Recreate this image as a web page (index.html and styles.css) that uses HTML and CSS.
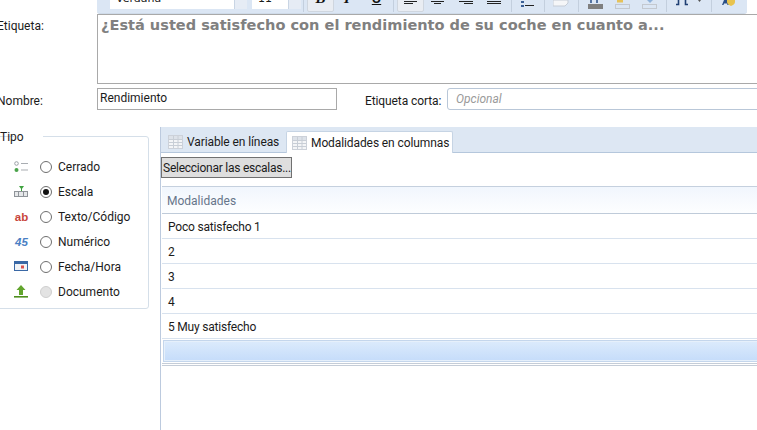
FILE: index.html
```html
<!DOCTYPE html>
<html lang="es">
<head>
<meta charset="utf-8">
<title>Pregunta</title>
<link rel="stylesheet" href="styles.css">
</head>
<body>
<svg class="defs" width="0" height="0">
  <symbol id="grid" viewBox="0 0 15 14">
    <rect x="0.5" y="0.5" width="14" height="13" fill="#f4f5f7" stroke="#ccd1d9"/>
    <rect x="1" y="1" width="13" height="3" fill="#dde2e9"/>
    <path d="M5.5 1v12M10 1v12M1 4.5h13M1 7.5h13M1 10.5h13" stroke="#c8ced6" fill="none"/>
  </symbol>
</svg>
<main class="page">
  <div class="toolbar">
    <div class="toolbar-row">
      <span class="grip"></span>
      <span class="combo font-combo"><span class="combo-text">Verdana</span><span class="combo-drop"></span></span>
      <span class="combo size-combo"><span class="combo-text">11</span><span class="combo-drop"></span></span>
      <span class="sep s1"></span>
      <span class="tool active bold">B</span>
      <span class="tool italic">I</span>
      <span class="tool underline">U</span>
      <span class="sep"></span>
      <span class="tool icon active align"><svg width="14" height="6"><path d="M0 1.5h13M0 3.5h9" stroke="#222"/></svg></span>
      <span class="tool icon align"><svg width="14" height="6"><path d="M0 1.5h13M3 3.5h7" stroke="#222"/></svg></span>
      <span class="tool icon align"><svg width="14" height="6"><path d="M0 1.5h14M5 3.5h9" stroke="#222"/></svg></span>
      <span class="tool icon align"><svg width="14" height="6"><path d="M0 1.5h14M0 3.5h14" stroke="#222"/></svg></span>
      <span class="sep s3"></span>
      <span class="tool icon bullets"><svg width="14" height="8"><rect x="0" y="1" width="3" height="2" fill="#3a5f95"/><rect x="0" y="5" width="3" height="2" fill="#3a5f95"/><path d="M4 5.5h9" stroke="#222"/></svg></span>
      <span class="sep"></span>
      <span class="tool icon paste"><svg width="18" height="8"><path d="M0 0h15v3l-3 3H0z" fill="#f5f6f8" stroke="#c5ccd6"/></svg></span>
      <span class="sep"></span>
      <span class="tool icon color first-color"><svg width="16" height="10"><path d="M3 0v3M9 0v3" stroke="#2a4f86" stroke-width="1.5"/><rect x="0" y="4" width="15" height="5" fill="#7f7f7f"/></svg></span>
      <span class="tool icon color"><svg width="16" height="10"><rect x="2" y="0" width="6" height="2.5" fill="#e6c25a"/><rect x="0.5" y="4.5" width="14" height="4" fill="none" stroke="#c3c8cf"/></svg></span>
      <span class="tool icon color"><svg width="16" height="10"><path d="M5 0h6l-3 3z" fill="#8fb2da"/><rect x="0.5" y="4.5" width="14" height="4" fill="none" stroke="#c3c8cf"/></svg></span>
      <span class="sep s3"></span>
      <span class="tool icon braces"><svg width="28" height="8"><path d="M3.5 0v4.5H1M10.5 0v4.5H13" fill="none" stroke="#1f3f73" stroke-width="1.6"/><path d="M23 0l1.5 2L26 0z" fill="#555"/></svg></span>
      <span class="sep"></span>
      <span class="tool icon spell"><svg width="15" height="8"><path d="M0 5l2-5h3l2 5H5.5L5 3.5H2L1.5 5z" fill="#2a4f86"/><path d="M5 0h8v2c0 2-2 3-4 4-2-1-4-2-4-4z" fill="#e8c34e"/></svg></span>
    </div>
  </div>

  <section class="form">
    <div class="form-row editor-row">
      <span class="field-label label-top">Etiqueta:</span>
      <div class="editor">¿Está usted satisfecho con el rendimiento de su coche en cuanto a...</div>
    </div>
    <div class="form-row name-row">
      <span class="field-label name-label">Nombre:</span>
      <div class="input name-input">Rendimiento</div>
      <span class="short-label">Etiqueta corta:</span>
      <div class="input short-input">Opcional</div>
    </div>
  </section>

  <section class="lower">
    <fieldset class="type-group">
      <legend>Tipo</legend>
      <div class="type-row">
        <svg class="type-icon" width="15" height="12" viewBox="0 0 15 12"><circle cx="2.5" cy="2.5" r="1.8" fill="#fff" stroke="#9aa0a6"/><circle cx="2.5" cy="9" r="2" fill="#4aa34a"/><path d="M7 2.5h7M7 9h7" stroke="#a9adb2" stroke-width="1.2"/></svg>
        <span class="radio"></span><span>Cerrado</span>
      </div>
      <div class="type-row">
        <svg class="type-icon" width="15" height="12" viewBox="0 0 15 12"><path d="M5 0h5L7.5 3.5z" fill="#3fa33f"/><rect x="7" y="2" width="1" height="3" fill="#3fa33f"/><rect x="0.5" y="5.5" width="13" height="5" fill="#e6e8ea" stroke="#8f9499"/><path d="M4.5 5.5v5M9.5 5.5v5" stroke="#8f9499"/></svg>
        <span class="radio checked"></span><span>Escala</span>
      </div>
      <div class="type-row">
        <span class="type-icon glyph ab">ab</span>
        <span class="radio"></span><span>Texto/Código</span>
      </div>
      <div class="type-row">
        <span class="type-icon glyph num">45</span>
        <span class="radio"></span><span>Numérico</span>
      </div>
      <div class="type-row">
        <svg class="type-icon" width="15" height="11" viewBox="0 0 15 11"><rect x="0" y="0" width="14" height="10" fill="#3a68a5"/><rect x="1" y="3" width="12" height="6" fill="#f1f3f6"/><rect x="7" y="4.5" width="3" height="3" fill="#d9534f"/></svg>
        <span class="radio"></span><span>Fecha/Hora</span>
      </div>
      <div class="type-row">
        <svg class="type-icon" width="15" height="13" viewBox="0 0 15 13"><path d="M7 0l4.5 5H9v5H5V5H2.5z" fill="#62a52d"/><rect x="0" y="11" width="14" height="1.6" fill="#4f8f1f"/></svg>
        <span class="radio disabled"></span><span>Documento</span>
      </div>
    </fieldset>

    <div class="panel">
      <div class="tabs">
        <div class="tab"><svg class="tab-icon" width="15" height="14"><use href="#grid"/></svg>Variable en líneas</div>
        <div class="tab current"><svg class="tab-icon" width="15" height="14"><use href="#grid"/></svg>Modalidades en columnas</div>
      </div>
      <div class="tab-body">
        <button class="scale-button" type="button">Seleccionar las escalas...</button>
        <div class="table">
          <div class="table-head">Modalidades</div>
          <div class="table-row">Poco satisfecho 1</div>
          <div class="table-row">2</div>
          <div class="table-row">3</div>
          <div class="table-row">4</div>
          <div class="table-row">5 Muy satisfecho</div>
          <div class="table-new"></div>
        </div>
      </div>
    </div>
  </section>
</main>
</body>
</html>
```

FILE: styles.css
```css
* { box-sizing: border-box; }
html, body { margin: 0; padding: 0; background: #fff; }
.defs { position: absolute; }
.page {
  width: 757px;
  height: 430px;
  overflow: hidden;
  font-family: Roboto, "Noto Sans", sans-serif;
  font-size: 12px;
  color: #1b1b1b;
  white-space: nowrap;
}

/* toolbar, scrolled partly out of view */
.toolbar {
  width: 650px;
  height: 14px;
  margin-left: 97px;
  overflow: hidden;
  background: #dbe6f4;
  border-bottom: 1px solid #cfdbe9;
  border-radius: 0 0 3px 3px;
}
.toolbar-row {
  display: flex;
  align-items: flex-start;
  height: 27px;
  margin-top: -15px;
}
.grip { width: 13px; }
.combo { display: flex; height: 24px; background: #fff; }
.font-combo { width: 137px; }
.size-combo { width: 49px; margin-left: 5px; }
.combo-text {
  flex: 1;
  padding: 7px 0 0 6px;
  font-family: "DejaVu Sans", sans-serif;
  font-size: 11px;
  line-height: 14px;
}
.combo-drop { width: 13px; background: #e6ecf5; border-left: 1px solid #c9d5e4; }
.sep { flex: none; width: 1px; height: 27px; background: #c3cfde; }
.s1 { margin-left: 2px; }
.s3 { margin-left: 3px; }
.tool { display: flex; justify-content: center; height: 27px; flex: none; }
.tool.icon { padding-top: 15px; }
.tool svg { flex: none; }
.active { background: #e9edf3; border: 1px solid #cfd6df; border-radius: 2px; }
.bold, .italic, .underline {
  align-items: center;
  font-family: "Liberation Serif", serif;
  font-size: 15px;
  font-weight: 700;
  color: #111;
}
.bold { width: 27px; margin-left: 3px; font-style: italic; }
.italic { width: 26px; font-style: italic; }
.underline { width: 33px; text-decoration: underline; font-family: "Liberation Sans", sans-serif; font-size: 13px; }
.align { width: 28px; }
.align.active { width: 27px; margin-left: 3px; padding-top: 14px; }
.bullets { width: 32px; }
.paste { width: 33px; }
.color { width: 27px; }
.first-color { margin-left: 3px; }
.braces { width: 44px; }
.spell { width: 34px; }

/* form */
.form { margin-left: -3px; margin-right: -20px; }
.form-row { display: flex; }
.field-label { width: 100px; flex: none; }
.label-top { padding-top: 5px; }
.editor {
  flex: 1;
  height: 70px;
  padding: 0 3px;
  border: 1px solid #a9a9a9;
  font-family: "DejaVu Sans", sans-serif;
  font-size: 14.55px;
  font-weight: 700;
  line-height: 20px;
  color: #808080;
}
.name-row { margin-top: 4px; align-items: center; height: 22px; }
.name-label { padding-top: 3px; }
.input { height: 22px; border: 1px solid #a9a9a9; }
.name-input { width: 240px; padding: 0 2px; line-height: 18px; }
.short-label { margin-left: 28px; width: 82px; padding-top: 3px; letter-spacing: -0.1px; }
.short-input {
  flex: 1;
  padding-left: 8px;
  border-color: #b9c7d8;
  border-radius: 3px;
  line-height: 21px;
  font-style: italic;
  color: #9a9a9a;
}

/* lower part */
.lower { display: flex; margin-top: 17px; height: 303px; }
.type-group {
  flex: none;
  width: 159px;
  height: 181px;
  margin: 1px 0 0 -10px;
  padding: 10px 0 0 23px;
  border: 1px solid #d5dfe9;
  border-radius: 3px;
}
.type-group legend { padding: 0 5px 0 0; line-height: 16px; position: relative; left: -14px; top: 1px; }
.type-row { display: flex; align-items: center; height: 25px; }
.type-icon { width: 15px; flex: none; margin-right: 11px; }
.glyph { font-family: "Liberation Sans", sans-serif; font-weight: 700; font-size: 11.5px; line-height: 12px; text-align: center; }
.ab { color: #c8453c; }
.num { color: #4a7fc4; font-style: italic; }
.radio {
  flex: none;
  position: relative;
  width: 12px;
  height: 12px;
  margin-right: 6px;
  border: 1px solid #6e6e6e;
  border-radius: 50%;
  background: #fff;
}
.radio.checked::after {
  content: "";
  position: absolute;
  left: 2px;
  top: 2px;
  width: 6px;
  height: 6px;
  border-radius: 50%;
  background: #111;
}
.radio.disabled { background: #e3e3e3; border-color: #cfcfcf; }

.panel { flex: 1; margin-left: 11px; margin-right: -20px; border-left: 1px solid #bccade; }
.tabs {
  display: flex;
  align-items: flex-end;
  height: 26px;
  padding-left: 4px;
  background: #dde7f3;
  border-bottom: 1px solid #b5c7dc;
}
.tab { display: flex; align-items: center; height: 21px; width: 121px; padding-left: 3px; letter-spacing: -0.1px; }
.tab-icon { margin-right: 4px; flex: none; }
.tab.current {
  width: 167px;
  height: 22px;
  margin-bottom: -1px;
  padding-left: 5px;
  background: #fff;
  border: 1px solid #c6d4e4;
  border-bottom: 0;
  border-radius: 2px 2px 0 0;
}
.tab-body { padding-top: 4px; }
.scale-button {
  display: block;
  width: 131px;
  height: 21px;
  padding: 0 1px;
  font: inherit;
  letter-spacing: -0.25px;
  color: #1b1b1b;
  background: #dedede;
  border: 1px solid #707070;
  white-space: nowrap;
}
.table { margin-top: 8px; margin-left: 1px; border-top: 1px solid #c5d0de; border-bottom: 3px double #c5cdd8; }
.table-head {
  height: 27px;
  padding: 1px 0 0 5px;
  line-height: 27px;
  color: #66758a;
  background: linear-gradient(#f1f6fd, #fdfeff);
  border-bottom: 1px solid #bfcbd9;
}
.table-row {
  height: 25px;
  padding: 1px 0 0 6px;
  line-height: 25px;
  letter-spacing: -0.2px;
  border-bottom: 1px solid #d8e2ee;
}
.table-new {
  height: 22px;
  margin: 1px 0 1px 1px;
  background: linear-gradient(#dcebfc, #c5dcfa);
  border: 1px solid #c4d6ec;
  box-shadow: inset 0 0 0 1px #e6f0fb;
}
```
